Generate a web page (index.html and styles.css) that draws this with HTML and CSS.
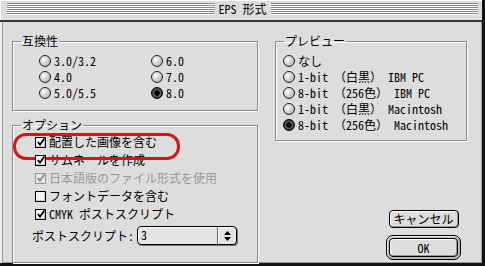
FILE: index.html
```html
<!DOCTYPE html>
<html lang="ja">
<head>
  <meta charset="UTF-8">
  <title>EPS 形式</title>
  <link rel="stylesheet" href="styles.css">
</head>
<body>

  <div class="window">
    <div class="titlebar">
      <span class="stripes"></span>
      <span class="title">EPS 形式</span>
      <span class="stripes"></span>
    </div>

    <div class="body">
      <div class="col-left">
        <fieldset class="group compat">
          <legend>互換性</legend>
          <div class="compat-list">
            <div class="opt"><span class="radio"></span>3.0/3.2</div>
            <div class="opt"><span class="radio"></span>4.0</div>
            <div class="opt"><span class="radio"></span>5.0/5.5</div>
            <div class="opt"><span class="radio"></span>6.0</div>
            <div class="opt"><span class="radio"></span>7.0</div>
            <div class="opt"><span class="radio on"></span>8.0</div>
          </div>
        </fieldset>

        <fieldset class="group options">
          <legend>オプション</legend>
          <div class="checks">
            <div class="highlight"></div>
            <div class="opt"><span class="check on"></span>配置した画像を含む</div>
            <div class="opt"><span class="check on"></span>サムネールを作成</div>
            <div class="opt dim"><span class="check on"></span>日本語版のファイル形式を使用</div>
            <div class="opt"><span class="check"></span>フォントデータを含む</div>
            <div class="opt"><span class="check on"></span>CMYK ポストスクリプト</div>
          </div>
          <div class="ps-row">
            <span>ポストスクリプト:</span>
            <div class="popup">
              <span class="popup-value">3</span>
              <span class="popup-arrows">
                <svg width="7" height="10" viewBox="0 0 7 10"><path d="M3.5 0 L7 4 L0 4 Z M0 6 L7 6 L3.5 10 Z" fill="#000"/></svg>
              </span>
            </div>
          </div>
        </fieldset>
      </div>

      <div class="col-right">
        <fieldset class="group preview">
          <legend>プレビュー</legend>
          <div class="preview-list">
            <div class="opt"><span class="radio"></span>なし</div>
            <div class="opt"><span class="radio"></span>1-bit （白黒） IBM PC</div>
            <div class="opt"><span class="radio"></span>8-bit （256色） IBM PC</div>
            <div class="opt"><span class="radio"></span>1-bit （白黒） Macintosh</div>
            <div class="opt"><span class="radio on"></span>8-bit （256色） Macintosh</div>
          </div>
        </fieldset>

        <div class="buttons">
          <button class="btn">キャンセル</button>
          <div class="default-ring">
            <button class="btn">OK</button>
          </div>
        </div>
      </div>
    </div>
  </div>

</body>
</html>
```

FILE: styles.css
```css
* {
  box-sizing: border-box;
}

html, body {
  margin: 0;
  padding: 0;
  overflow: hidden;
}

body {
  font-family: "Noto Sans Mono CJK JP", "Noto Sans CJK JP", sans-serif;
  font-size: 12px;
  line-height: 16px;
  color: #000;
  background: #fff;
}

.window {
  width: 485px;
  height: 266px;
  display: flex;
  flex-direction: column;
  background: #dddddd;
  border-right: 3px solid #111;
  border-bottom: 3px solid #111;
}

/* title bar */
.titlebar {
  height: 22px;
  display: flex;
  align-items: center;
  padding: 0 4px 2px 7px;
  border-bottom: 2px solid #333;
  box-shadow: inset 1px 1px 0 #fff;
}

.stripes {
  flex: 1;
  height: 12px;
  background: repeating-linear-gradient(#888 0 1px, #fff 1px 2px);
}

.title {
  padding: 0 4px;
  line-height: 14px;
}

/* dialog body */
.body {
  flex: 1;
  display: flex;
  gap: 17px;
  padding: 11px 15px 0 12px;
  box-shadow: inset 2px 0 0 #eee, inset 3px 0 0 #999, inset -1px -1px 0 #999;
}

.col-left {
  width: 246px;
  display: flex;
  flex-direction: column;
  gap: 6px;
}

.col-right {
  width: 192px;
  display: flex;
  flex-direction: column;
}

.group {
  margin: 0;
  padding: 0;
  min-width: 0;
  border: 1px solid #888;
  box-shadow: inset 1px 1px 0 #fff, 1px 1px 0 #fff;
}

.group legend {
  margin-left: 8px;
  padding: 0 1px;
  line-height: 16px;
}

.opt {
  display: flex;
  align-items: center;
  height: 16px;
  white-space: nowrap;
}

/* radio buttons */
.radio {
  width: 12px;
  height: 12px;
  margin-right: 3px;
  border-radius: 50%;
  border: 1px solid #222;
  background: radial-gradient(circle at 35% 35%, #fff 0, #e4e4e4 30%, #a8a8a8 90%);
  flex-shrink: 0;
}

.radio.on {
  border-color: #000;
  background: radial-gradient(circle, #000 0 2.5px, #666 3px, #333 5px);
}

/* checkboxes */
.check {
  position: relative;
  width: 11px;
  height: 11px;
  margin-right: 3px;
  border: 1px solid #000;
  background: #f4f4f4;
  box-shadow: inset -1px -1px 0 #ccc;
  flex-shrink: 0;
}

.check.on::after {
  content: "";
  position: absolute;
  left: 1px;
  top: 0px;
  width: 8px;
  height: 8px;
  background: no-repeat center / 8px 8px url("data:image/svg+xml,%3Csvg xmlns='http://www.w3.org/2000/svg' viewBox='0 0 8 8'%3E%3Cpath d='M0.8 4 L3 6.6 L7.4 0.6' fill='none' stroke='%23000' stroke-width='1.8'/%3E%3C/svg%3E");
}

.dim {
  color: #999;
}

.dim .check {
  border-color: #999;
  background: #e6e6e6;
  box-shadow: none;
}

.dim .check.on::after {
  opacity: 0.4;
}

/* compat group */
.compat {
  padding-bottom: 9px;
}

.compat-list {
  display: grid;
  grid-template-columns: 112px 112px;
  grid-template-rows: repeat(3, 16px);
  grid-auto-flow: column;
  margin-top: 4px;
  padding-left: 26px;
}

/* options group */
.options {
  flex: 1;
}

.checks {
  position: relative;
  display: flex;
  flex-direction: column;
  gap: 2px;
  margin-top: 1px;
  padding-left: 22px;
}

.highlight {
  position: absolute;
  left: 0;
  top: -1px;
  width: 167px;
  height: 27px;
  border: 3px solid #cc1a1a;
  border-radius: 13px;
  pointer-events: none;
}

.ps-row {
  display: flex;
  align-items: center;
  gap: 3px;
  margin-top: 4px;
  padding-left: 19px;
}

.popup {
  display: flex;
  width: 100px;
  height: 19px;
  border: 1px solid #000;
  border-radius: 4px;
  background: #e4e4e4;
  box-shadow: 1px 1px 0 #777, inset 1px 1px 0 #fff;
}

.popup-value {
  flex: 1;
  padding-left: 3px;
  line-height: 16px;
}

.popup-arrows {
  width: 19px;
  display: flex;
  align-items: center;
  justify-content: center;
  border-left: 1px solid #666;
  box-shadow: inset 1px 0 0 #fff;
}

/* preview group */
.preview {
  padding-bottom: 7px;
}

.preview-list {
  margin-top: 4px;
  padding-left: 7px;
}

/* buttons */
.buttons {
  margin-top: auto;
  margin-bottom: 3px;
  margin-right: 6px;
  align-self: flex-end;
  width: 75px;
  display: flex;
  flex-direction: column;
  align-items: center;
  gap: 7px;
}

.btn {
  width: 70px;
  height: 18px;
  padding: 0;
  font: inherit;
  line-height: 14px;
  color: #000;
  border: 1px solid #000;
  border-radius: 4px;
  background: #dddddd;
  box-shadow: inset 1px 1px 0 #fff, inset -1px -1px 0 #999;
}

.default-ring {
  padding: 2px;
  border: 1px solid #000;
  border-radius: 7px;
  background: #bbb;
  box-shadow: inset 1px 1px 0 #eee;
}

.default-ring .btn {
  width: 69px;
  height: 19px;
}
```
